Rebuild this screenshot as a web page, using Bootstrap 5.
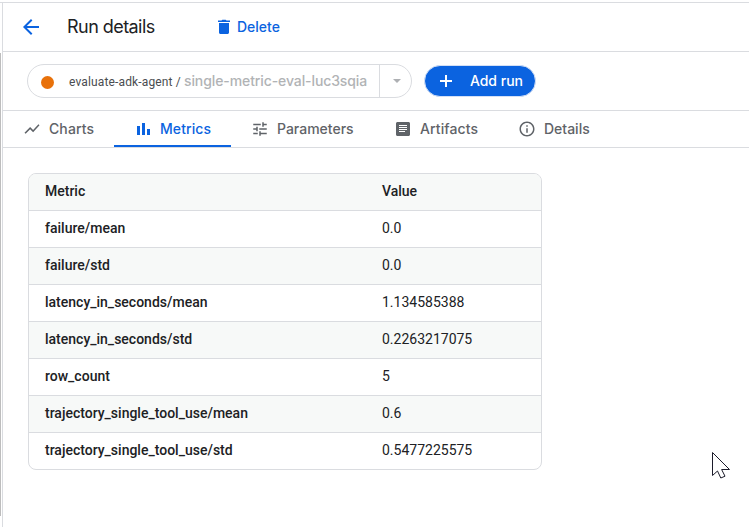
<!DOCTYPE html>
<html lang="en">
<head>
<meta charset="utf-8">
<meta name="viewport" content="width=device-width, initial-scale=1">
<title>Run details</title>
<link href="https://cdn.jsdelivr.net/npm/bootstrap@5.3.0/dist/css/bootstrap.min.css" rel="stylesheet">
<style>
:root{--line:#dadce0;--accent:#0b63e0;--ink:#202124;--muted:#5f6368}
body{font-family:Roboto,sans-serif;font-size:14px;line-height:20px;color:var(--ink);height:527px;overflow:hidden;padding-top:2px}
svg{display:block;flex:none;fill:currentColor}
.rail{width:2px;flex:none;border-top:1px solid var(--line)}
.rail-thumb{width:1px;height:463px;margin-top:50px;background:#bdbdbd}
.panel{border-left:1px solid var(--line);border-top:1px solid var(--line);min-width:0}
.gs{font-family:Inter,sans-serif;font-weight:500}
.topbar{height:49px;border-bottom:1px solid var(--line);padding-left:16px}
.page-title{font-family:Inter,sans-serif;font-size:18px;font-weight:400;line-height:24px;margin-left:24px;width:148px;letter-spacing:-.55px}
.accent{color:var(--accent)}
.runbar{height:59px;border-bottom:1px solid var(--line);padding-left:24px}
.run-pill{width:385px;height:34px;border:1px solid var(--line);border-radius:17px;padding-left:13px}
.dot{width:13px;height:13px;background:#e8710a;margin-top:2px}
.crumb{font-size:12px;width:115px;margin-left:15px;padding-top:1px;color:#4a4d51;white-space:pre;letter-spacing:.14px}
.run-name{color:#b1b3b5;font-size:14px;white-space:nowrap;letter-spacing:-.1px}
.caret-cell{width:32px;border-left:1px solid var(--line);color:#aeb0b3;padding-left:2px}
.add-run{width:112px;height:32px;margin-left:12px;padding:0 12px 0 14px;background:var(--accent);color:#fff;border:1px solid #d4e0f5;font-size:14px;line-height:20px}
.add-run:hover{background:var(--accent);color:#fff}
.run-tabs{height:37px;border-bottom:1px solid var(--line);font-size:14px}
.run-tabs .nav-link{height:36px;padding:2px 0 0;color:var(--muted);border-bottom:2px solid transparent}
.run-tabs .nav-link.active{color:var(--accent);border-color:var(--accent)}
.w1{width:111px;letter-spacing:.1px}.w2{width:117px;letter-spacing:.08px}.w3{width:142px}.w4{width:124px;letter-spacing:.1px}.w5{width:110px}
.w1 a{padding-left:20px!important}.w2 a{padding-left:20px!important}.w3 a{padding-left:20px!important}.w4 a{padding-left:21px!important}.w5 a{padding-left:21px!important}
.metric-box{width:514px;margin:25px 0 0 25px;border:1px solid var(--line);border-radius:8px;overflow:hidden}
.metric-table{--bs-table-color:#202124;--bs-table-bg:transparent;table-layout:fixed;border-collapse:separate;border-spacing:0}
.metric-table th,.metric-table td{height:37px;padding:7px 16px 9px;border-bottom:1px solid var(--line)!important;line-height:20px}
.metric-table th{font-weight:500}
.metric-table tbody tr:last-child>*{height:36px;border-bottom:0!important}
.metric-table thead tr,.metric-table tbody tr:nth-child(even){background:#f7f9f8}
.metric-table col:first-child{width:337px}
.pointer{position:absolute;left:711px;top:451px}
</style>
</head>
<body>
<div class="d-flex h-100">
  <div class="rail"><div class="rail-thumb"></div></div>
  <main class="panel flex-grow-1">
    <header class="topbar d-flex align-items-center">
      <svg class="accent" width="24" height="24" viewBox="0 0 24 24"><path d="M20 11H7.83l5.59-5.59L12 4l-8 8 8 8 1.41-1.41L7.83 13H20z"/></svg>
      <h1 class="page-title mb-0">Run details</h1>
      <a href="#" class="d-flex align-items-center accent gs text-decoration-none">
        <svg width="18" height="18" viewBox="0 0 18 18"><path d="M4 5h10v9.500c0 .8-.7 1.500-1.500 1.500h-7C4.700 16 4 15.300 4 14.500zM3 2.500h3.500L7.300 1.700h3.400l.8.8H15V4H3z"/></svg>
        <span class="ms-1">Delete</span>
      </a>
    </header>
    <section class="runbar d-flex align-items-center">
      <div class="run-pill d-flex align-items-center">
        <span class="dot rounded-circle"></span>
        <span class="crumb">evaluate-adk-agent / </span>
        <span class="run-name gs flex-grow-1">single-metric-eval-luc3sqia</span>
        <span class="caret-cell d-flex align-self-stretch align-items-center justify-content-center"><svg width="8" height="4" viewBox="0 0 8 4"><path d="M0 0h8L4 4z"/></svg></span>
      </div>
      <button class="btn add-run gs rounded-pill d-flex align-items-center justify-content-between" type="button">
        <svg width="14" height="14" viewBox="0 0 14 14"><path d="M6 1h2v5h5v2H8v5H6V8H1V6h5z"/></svg>
        <span>Add run</span>
      </button>
    </section>
    <ul class="nav run-tabs gs flex-nowrap">
      <li class="nav-item w1"><a class="nav-link d-flex align-items-center" href="#"><svg width="18" height="18" viewBox="0 0 24 24"><path d="M3.500 18.490l6-6.010 4 4L22 6.920l-1.410-1.410-7.090 7.970-4-4L2 16.990z"/></svg><span class="ms-2">Charts</span></a></li>
      <li class="nav-item w2"><a class="nav-link active d-flex align-items-center" href="#"><svg width="18" height="18" viewBox="0 0 18 18"><path d="M3 6h3v9H3zM8 3h3v12H8zM13 9h3v6h-3z"/></svg><span class="ms-2">Metrics</span></a></li>
      <li class="nav-item w3"><a class="nav-link d-flex align-items-center" href="#"><svg width="18" height="18" viewBox="0 0 24 24"><path d="M3 17v2h6v-2H3zM3 5v2h10V5H3zm10 16v-2h8v-2h-8v-2h-2v6h2zM7 9v2H3v2h4v2h2V9H7zm14 4v-2H11v2h10zm-6-4h2V7h4V5h-4V3h-2v6z"/></svg><span class="ms-2">Parameters</span></a></li>
      <li class="nav-item w4"><a class="nav-link d-flex align-items-center" href="#"><svg width="18" height="18" viewBox="0 0 18 18"><path fill-rule="evenodd" d="M3.500 2h11c.8 0 1.500.7 1.500 1.500v11c0 .8-.7 1.500-1.500 1.500h-11c-.8 0-1.500-.7-1.500-1.500v-11C2 2.700 2.700 2 3.500 2zM5 5v1h8V5zM5 7v1h8V7zM5 9v1h8V9zM5 11v1h6v-1z"/></svg><span class="ms-2">Artifacts</span></a></li>
      <li class="nav-item w5"><a class="nav-link d-flex align-items-center" href="#"><svg width="18" height="18" viewBox="0 0 24 24"><path d="M11 7h2v2h-2zm0 4h2v6h-2zm1-9C6.480 2 2 6.480 2 12s4.480 10 10 10 10-4.480 10-10S17.520 2 12 2zm0 18c-4.410 0-8-3.590-8-8s3.590-8 8-8 8 3.590 8 8-3.590 8-8 8z"/></svg><span class="ms-2">Details</span></a></li>
    </ul>
    <div class="metric-box">
      <table class="table table-borderless metric-table mb-0">
        <colgroup><col><col></colgroup>
        <thead><tr><th>Metric</th><th>Value</th></tr></thead>
        <tbody>
          <tr><th>failure/mean</th><td>0.0</td></tr>
          <tr><th>failure/std</th><td>0.0</td></tr>
          <tr><th>latency_in_seconds/mean</th><td>1.134585388</td></tr>
          <tr><th>latency_in_seconds/std</th><td>0.2263217075</td></tr>
          <tr><th>row_count</th><td>5</td></tr>
          <tr><th>trajectory_single_tool_use/mean</th><td>0.6</td></tr>
          <tr><th>trajectory_single_tool_use/std</th><td>0.5477225575</td></tr>
        </tbody>
      </table>
    </div>
  </main>
</div>
<svg class="pointer" width="20" height="30" viewBox="0 0 20 30"><path d="M1.500 1.500v23l5-4.500 3.300 7 4.200-1.800-3.400-6.700H18.500z" fill="#fff" stroke="#1c1c2b" stroke-width="1"/></svg>
<script src="https://cdn.jsdelivr.net/npm/bootstrap@5.3.0/dist/js/bootstrap.bundle.min.js"></script>
</body>
</html>
